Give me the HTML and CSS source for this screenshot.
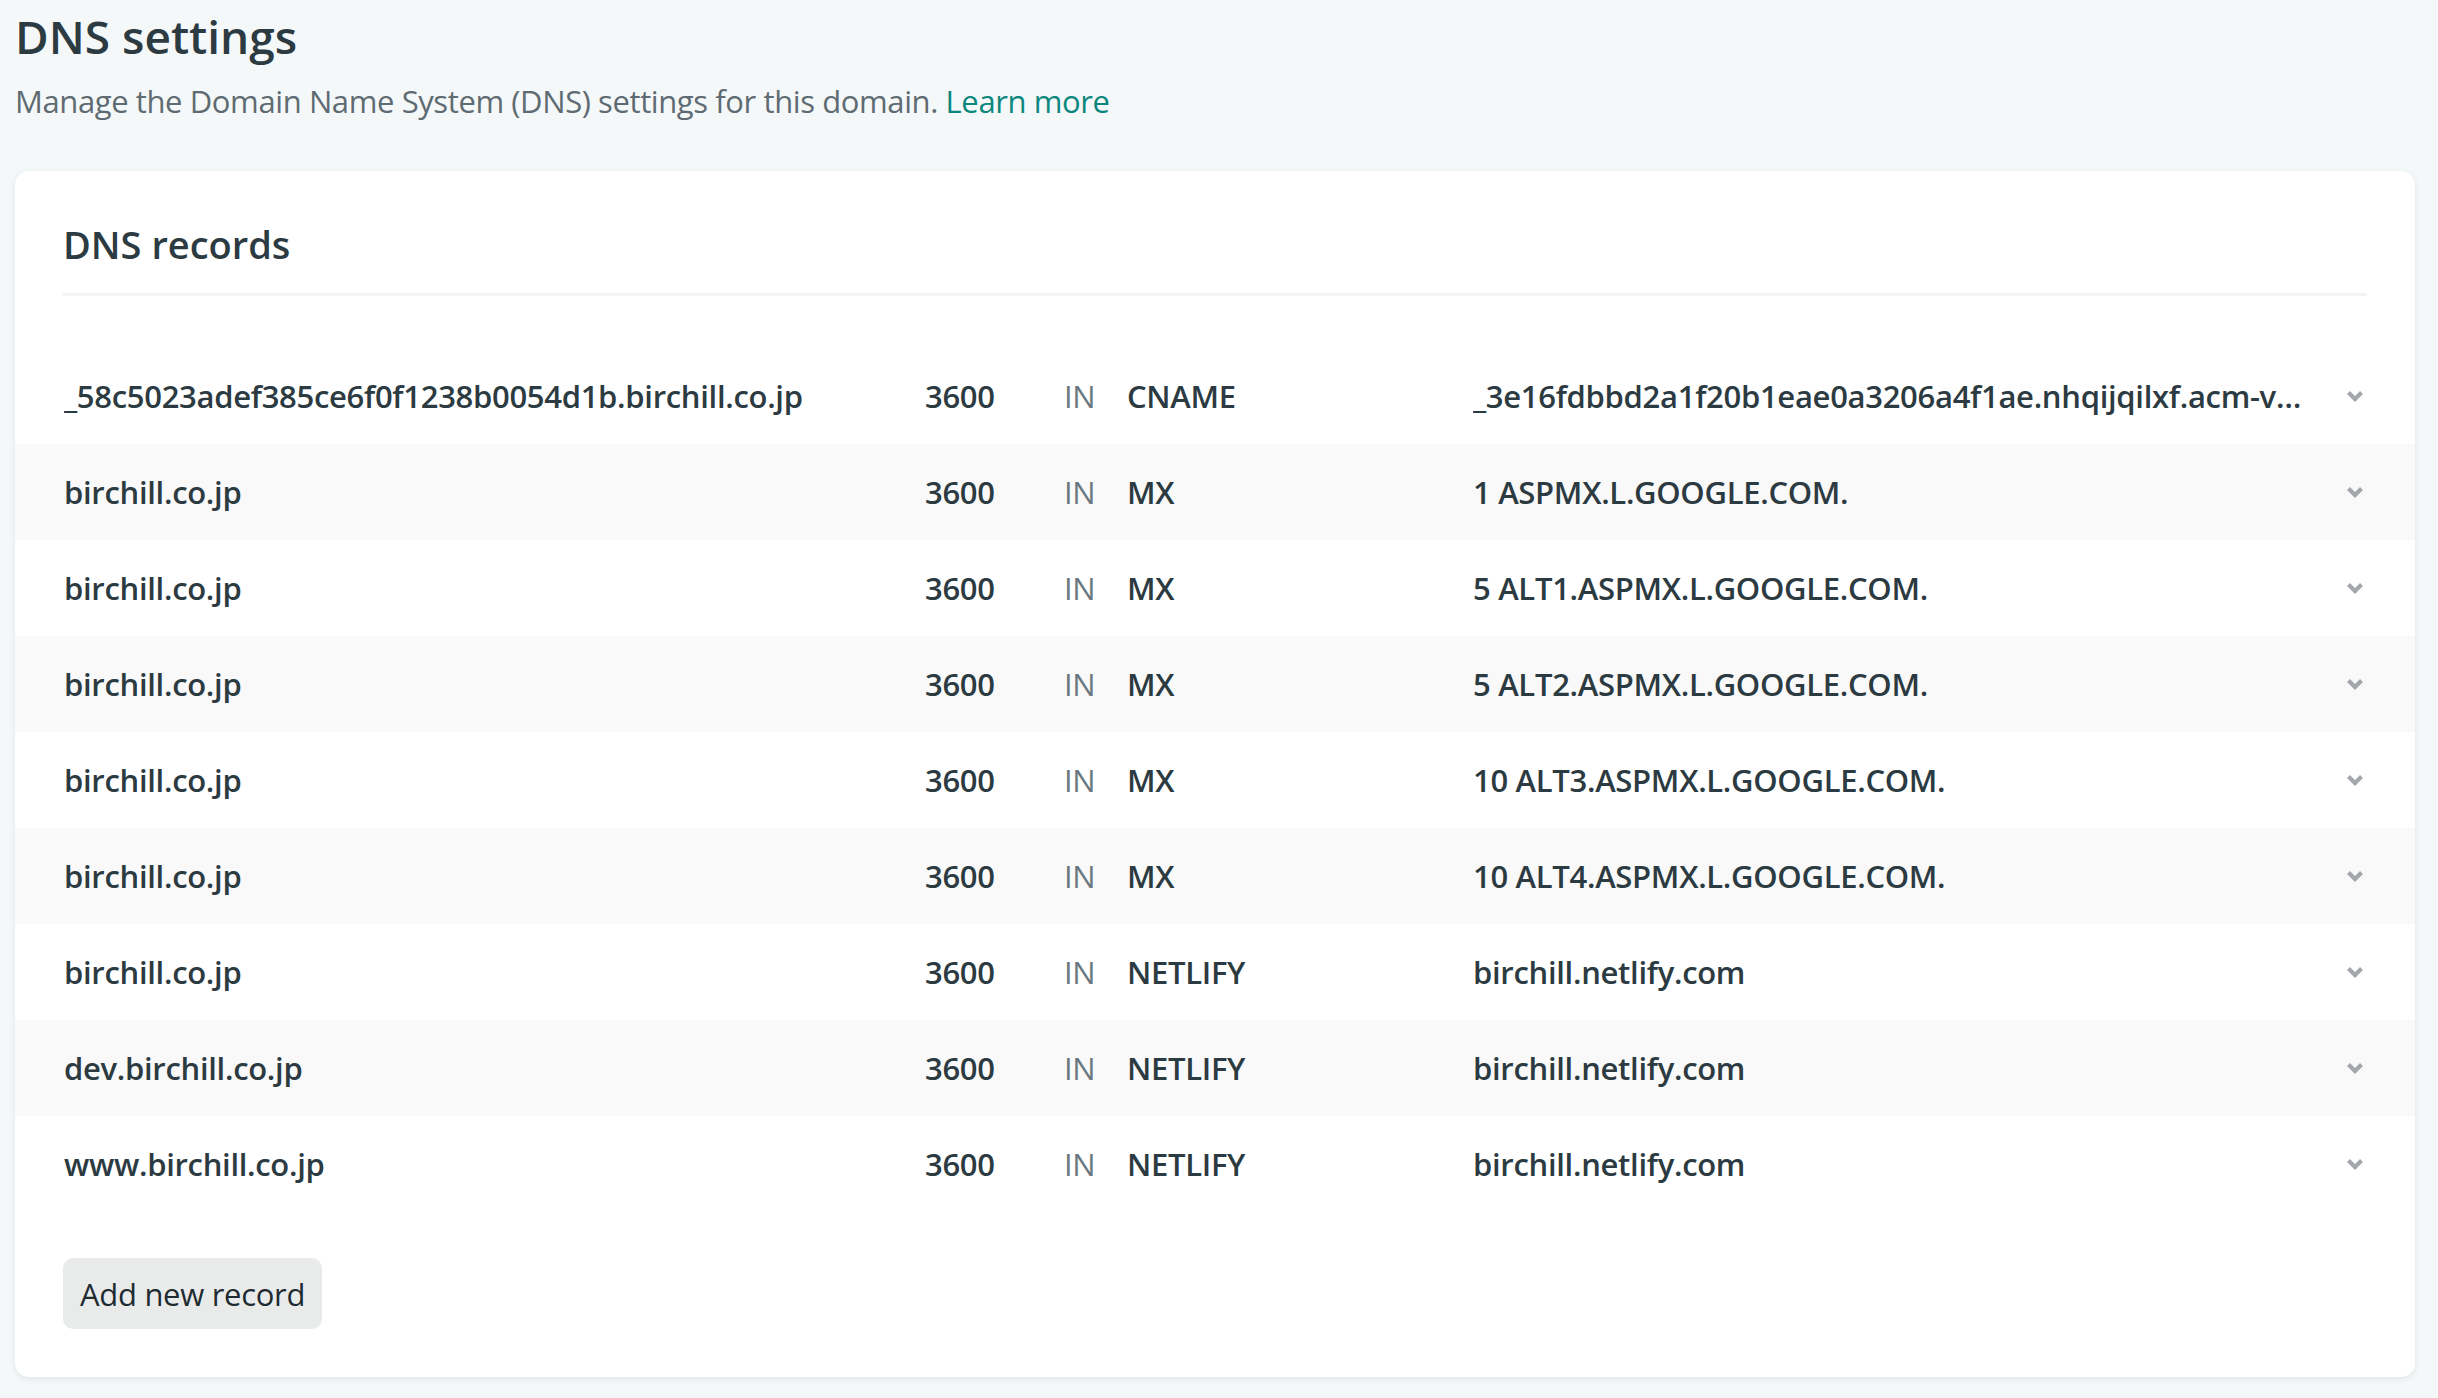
FILE: index.html
```html
<!DOCTYPE html>
<html lang="en">
<head>
<meta charset="utf-8">
<title>DNS settings</title>
<link rel="stylesheet" href="styles.css">
</head>
<body>
<header class="page-head">
  <h1 class="page-title">DNS settings</h1>
  <p class="page-desc">Manage the Domain Name System (DNS) settings for this domain. <a class="link" href="#">Learn more</a></p>
</header>
<section class="card">
  <h2 class="card-title">DNS records</h2>
  <div class="records">
    <div class="record">
      <span class="c-name">_58c5023adef385ce6f0f1238b0054d1b.birchill.co.jp</span>
      <span class="c-ttl">3600</span>
      <span class="c-in">IN</span>
      <span class="c-type">CNAME</span>
      <span class="c-value">_3e16fdbbd2a1f20b1eae0a3206a4f1ae.nhqijqilxf.acm-validations.aws.</span>
      <svg class="chev" viewBox="0 0 18 12"><path d="M2.5 2.5 L9 9 L15.5 2.5" fill="none" stroke="currentColor" stroke-width="4.2"/></svg>
    </div>
    <div class="record">
      <span class="c-name">birchill.co.jp</span>
      <span class="c-ttl">3600</span>
      <span class="c-in">IN</span>
      <span class="c-type">MX</span>
      <span class="c-value">1 ASPMX.L.GOOGLE.COM.</span>
      <svg class="chev" viewBox="0 0 18 12"><path d="M2.5 2.5 L9 9 L15.5 2.5" fill="none" stroke="currentColor" stroke-width="4.2"/></svg>
    </div>
    <div class="record">
      <span class="c-name">birchill.co.jp</span>
      <span class="c-ttl">3600</span>
      <span class="c-in">IN</span>
      <span class="c-type">MX</span>
      <span class="c-value">5 ALT1.ASPMX.L.GOOGLE.COM.</span>
      <svg class="chev" viewBox="0 0 18 12"><path d="M2.5 2.5 L9 9 L15.5 2.5" fill="none" stroke="currentColor" stroke-width="4.2"/></svg>
    </div>
    <div class="record">
      <span class="c-name">birchill.co.jp</span>
      <span class="c-ttl">3600</span>
      <span class="c-in">IN</span>
      <span class="c-type">MX</span>
      <span class="c-value">5 ALT2.ASPMX.L.GOOGLE.COM.</span>
      <svg class="chev" viewBox="0 0 18 12"><path d="M2.5 2.5 L9 9 L15.5 2.5" fill="none" stroke="currentColor" stroke-width="4.2"/></svg>
    </div>
    <div class="record">
      <span class="c-name">birchill.co.jp</span>
      <span class="c-ttl">3600</span>
      <span class="c-in">IN</span>
      <span class="c-type">MX</span>
      <span class="c-value">10 ALT3.ASPMX.L.GOOGLE.COM.</span>
      <svg class="chev" viewBox="0 0 18 12"><path d="M2.5 2.5 L9 9 L15.5 2.5" fill="none" stroke="currentColor" stroke-width="4.2"/></svg>
    </div>
    <div class="record">
      <span class="c-name">birchill.co.jp</span>
      <span class="c-ttl">3600</span>
      <span class="c-in">IN</span>
      <span class="c-type">MX</span>
      <span class="c-value">10 ALT4.ASPMX.L.GOOGLE.COM.</span>
      <svg class="chev" viewBox="0 0 18 12"><path d="M2.5 2.5 L9 9 L15.5 2.5" fill="none" stroke="currentColor" stroke-width="4.2"/></svg>
    </div>
    <div class="record">
      <span class="c-name">birchill.co.jp</span>
      <span class="c-ttl">3600</span>
      <span class="c-in">IN</span>
      <span class="c-type">NETLIFY</span>
      <span class="c-value">birchill.netlify.com</span>
      <svg class="chev" viewBox="0 0 18 12"><path d="M2.5 2.5 L9 9 L15.5 2.5" fill="none" stroke="currentColor" stroke-width="4.2"/></svg>
    </div>
    <div class="record">
      <span class="c-name">dev.birchill.co.jp</span>
      <span class="c-ttl">3600</span>
      <span class="c-in">IN</span>
      <span class="c-type">NETLIFY</span>
      <span class="c-value">birchill.netlify.com</span>
      <svg class="chev" viewBox="0 0 18 12"><path d="M2.5 2.5 L9 9 L15.5 2.5" fill="none" stroke="currentColor" stroke-width="4.2"/></svg>
    </div>
    <div class="record">
      <span class="c-name">www.birchill.co.jp</span>
      <span class="c-ttl">3600</span>
      <span class="c-in">IN</span>
      <span class="c-type">NETLIFY</span>
      <span class="c-value">birchill.netlify.com</span>
      <svg class="chev" viewBox="0 0 18 12"><path d="M2.5 2.5 L9 9 L15.5 2.5" fill="none" stroke="currentColor" stroke-width="4.2"/></svg>
    </div>
  </div>
  <button class="btn" type="button">Add new record</button>
</section>
</body>
</html>
```

FILE: styles.css
```css
html, body {
  margin: 0;
  padding: 0;
}
body {
  background: #f5f8f9;
  font-family: "Open Sans", "Noto Sans", sans-serif;
  color: #2c3a41;
  padding: 0 23px 20px 15px;
}
.page-head {
  padding-top: 4px;
}
.page-title {
  margin: 0;
  font-size: 46px;
  font-weight: 600;
  line-height: 64px;
  color: #2c3a41;
}
.page-desc {
  margin: 9px 0 0;
  font-size: 31px;
  letter-spacing: -0.4px;
  line-height: 48px;
  color: #5f6b72;
  font-weight: 400;
}
.link {
  color: #0b877d;
  text-decoration: none;
}
.card {
  margin-top: 46px;
  background: #ffffff;
  border-radius: 14px;
  box-shadow: 0 2px 6px rgba(30, 60, 70, 0.10);
  padding: 43px 0 48px;
}
.card-title {
  margin: 0 48px;
  font-size: 38px;
  font-weight: 600;
  line-height: 60px;
  padding-bottom: 19px;
  border-bottom: 3px solid #f3f4f4;
  color: #2c3a41;
}
.records {
  margin-top: 52px;
}
.record {
  display: grid;
  grid-template-columns: 861px 139px 63px 346px 1fr 21px;
  align-items: center;
  height: 96px;
  padding: 0 48px 0 49px;
  font-size: 31px;
  letter-spacing: -0.3px;
  font-weight: 600;
  color: #2c3a41;
}
.record:nth-child(even) {
  background: #f9f9f9;
}
.record > span {
  white-space: nowrap;
  overflow: hidden;
  text-overflow: ellipsis;
}
.c-value {
  padding-right: 30px;
}
.c-in {
  font-weight: 400;
  color: #6b7880;
}
.chev {
  width: 18px;
  height: 12px;
  color: #a3a7ab;
}
.btn {
  margin: 46px 0 0 48px;
  height: 71px;
  padding: 0 17px;
  border: 0;
  border-radius: 10px;
  background: #e9ebeb;
  font-family: "Open Sans", "Noto Sans", sans-serif;
  font-size: 31px;
  letter-spacing: -0.3px;
  color: #1f2b31;
  font-weight: 400;
}
```
